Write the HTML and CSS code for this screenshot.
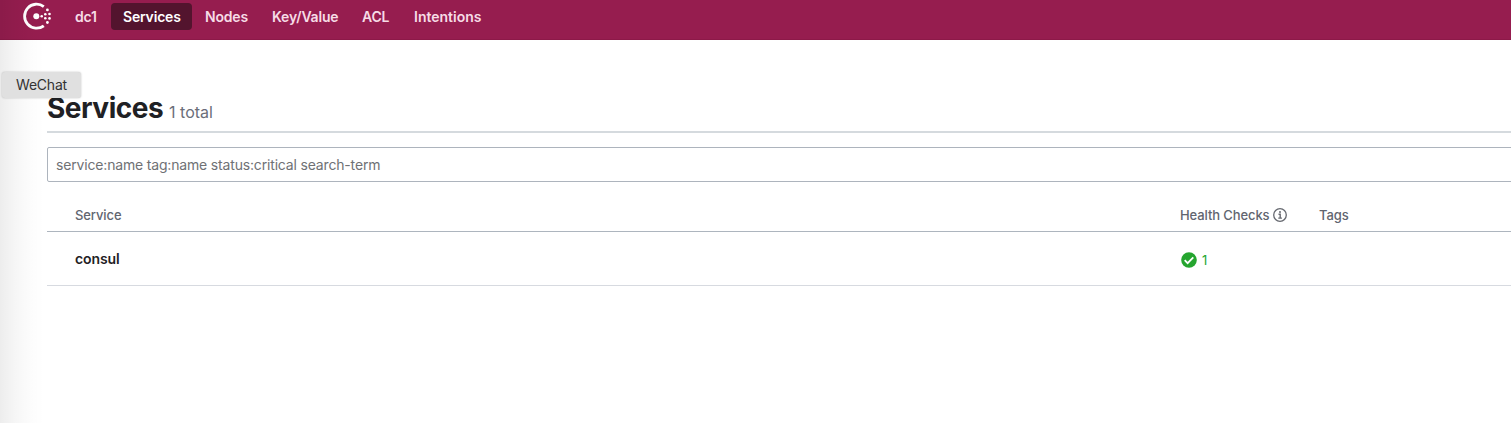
FILE: index.html
```html
<!DOCTYPE html>
<html lang="en">
<head>
<meta charset="utf-8">
<title>Services - Consul</title>
<link rel="stylesheet" href="styles.css">
</head>
<body>
<header class="topbar">
  <svg class="logo" width="30" height="28" viewBox="0 0 30 28" aria-label="Consul">
    <path d="M21.8 4.6A12 12 0 1 0 21.8 23.8" fill="none" stroke="#fff" stroke-width="2.8"/>
    <g fill="#fff">
      <circle cx="14.3" cy="14.2" r="3"/>
      <circle cx="19.7" cy="14.2" r="1.3"/>
      <circle cx="23.3" cy="12.2" r="1.3"/><circle cx="23.3" cy="16.3" r="1.3"/>
      <circle cx="25.4" cy="7.9" r="1.4"/><circle cx="27.5" cy="12" r="1.3"/>
      <circle cx="27.5" cy="16.4" r="1.3"/><circle cx="25.4" cy="20.5" r="1.4"/>
    </g>
  </svg>
  <nav class="nav">
    <a class="nav-item dc">dc1</a>
    <a class="nav-item active">Services</a>
    <a class="nav-item nodes">Nodes</a>
    <a class="nav-item kv">Key/Value</a>
    <a class="nav-item acl">ACL</a>
    <a class="nav-item intentions">Intentions</a>
  </nav>
</header>
<main class="content">
  <div class="heading"><h1>Services</h1><span class="total">1 total</span></div>
  <input class="search" type="text" placeholder="service:name tag:name status:critical search-term">
  <div class="row head">
    <span>Service</span>
    <span class="checks">Health Checks
      <svg class="info" width="14" height="14" viewBox="0 0 14 14"><circle cx="7" cy="7" r="6.3" fill="none" stroke="#666970" stroke-width="1.3"/><circle cx="7" cy="4" r="1" fill="#666970"/><path d="M5.5 6.2H7.2V10M5.3 10.1H8.9" fill="none" stroke="#666970" stroke-width="1.4"/></svg>
    </span>
    <span>Tags</span>
  </div>
  <div class="row item">
    <span class="name">consul</span>
    <span class="passing"><svg width="16" height="16" viewBox="0 0 16 16"><circle cx="8" cy="8" r="7.8" fill="#25a52f"/><path d="M3.7 8.2L6.6 11.1L12.3 5.3" fill="none" stroke="#fff" stroke-width="1.8"/></svg><span>1</span></span>
    <span></span>
  </div>
</main>
<div class="edge-shade"></div>
<div class="tooltip">WeChat</div>
</body>
</html>
```
FILE: styles.css
```css
* { box-sizing: border-box; }
body {
  margin: 0;
  height: 423px;
  overflow: hidden;
  background: #fff;
  color: #1f2124;
  font-family: Inter, "Liberation Sans", sans-serif;
}
.topbar {
  display: flex;
  height: 40px;
  padding: 3px 0 0 22px;
  background: #961d4f;
  border-bottom: 1px solid #8c1948;
}
.logo { flex: none; margin-top: -1px; }
.nav { display: flex; margin-left: 11px; }
.nav-item {
  height: 27px;
  padding-left: 12px;
  border-radius: 4px;
  color: #f6dce6;
  font-size: 14px;
  font-weight: 600;
  letter-spacing: -0.18px;
  line-height: 28px;
  white-space: nowrap;
}
.nav-item.active { width: 81px; background: #53142e; color: #fff; }
.dc { width: 48px; }
.nodes { width: 68px; padding-left: 13px; }
.kv { width: 90px; }
.acl { width: 52px; }
.nav-item.intentions { letter-spacing: 0; }
.content { padding: 49px 0 0 47px; }
.heading {
  display: flex;
  align-items: baseline;
  height: 44px;
  gap: 6px;
  border-bottom: 2px solid #d5dade;
}
h1 {
  margin: 0;
  font-size: 28px;
  line-height: 38px;
  font-weight: 700;
  letter-spacing: -0.5px;
}
.total { color: #6a6e79; font-size: 16px; }
.search {
  display: block;
  width: calc(100% + 10px);
  height: 35px;
  margin-top: 14px;
  padding: 0 8px;
  border: 1px solid #adb4bd;
  border-radius: 2px;
  font: 14px Inter, "Liberation Sans", sans-serif;
  letter-spacing: -0.17px;
}
.search::placeholder { color: #6f7175; opacity: 1; }
.row {
  display: grid;
  grid-template-columns: 1105px 139px 1fr;
  align-items: center;
  padding-left: 28px;
}
.head {
  height: 50px;
  padding-top: 17px;
  border-bottom: 1px solid #adb5be;
  color: #61656f;
  font-size: 13px;
  font-weight: 500;
  letter-spacing: -0.1px;
}
.checks { display: flex; align-items: center; gap: 4px; white-space: nowrap; }
.info { flex: none; }
.item { height: 54px; border-bottom: 1px solid #d7dae0; }
.name { font-size: 14px; font-weight: 600; letter-spacing: -0.1px; }
.passing {
  display: flex;
  align-items: center;
  gap: 5px;
  padding: 2px 0 0 1px;
  color: #25a52f;
  font-size: 13px;
}
.edge-shade {
  position: absolute;
  top: 0;
  left: 0;
  width: 44px;
  height: 423px;
  background: linear-gradient(90deg, rgba(0,0,0,.07), rgba(0,0,0,.035) 35%, rgba(0,0,0,.01) 70%, transparent);
}
.tooltip {
  position: absolute;
  top: 72px;
  left: 2px;
  width: 79px;
  height: 26px;
  border-radius: 3px;
  background: #e0e0e0;
  box-shadow: 0 0 2px rgba(0,0,0,.25);
  color: #333;
  font-size: 14px;
  letter-spacing: -0.2px;
  line-height: 26px;
  text-align: center;
}
```
